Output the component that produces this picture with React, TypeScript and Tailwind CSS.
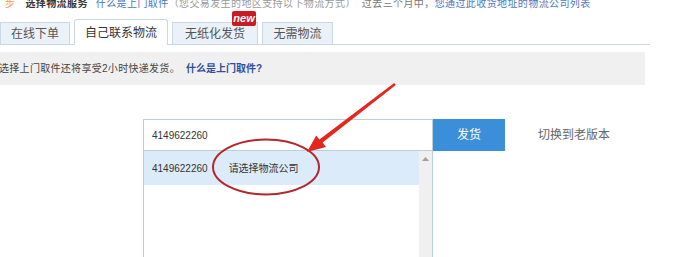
import React from "react";

const tabs = [
  { label: "在线下单", w: "w-[70px]" },
  { label: "自己联系物流", w: "w-[94px]", active: true },
  { label: "无纸化发货", w: "w-[86px]", badge: true },
  { label: "无需物流", w: "w-[71px]" },
];

export default function App() {
  return (
    <div
      className="relative w-[673px] h-[257px] overflow-hidden bg-white"
      style={{ fontFamily: '"Liberation Sans", "Noto Sans CJK SC", sans-serif' }}
    >
      {/* step line, cut off at the top */}
      <div className="-mt-[1px] h-[21px] pl-[5px] flex items-start text-[10px] leading-[10px] tracking-[0.4px] whitespace-nowrap">
        <span className="text-[#f0a050]">步</span>
        <span className="ml-[10px] font-bold text-[#333]">选择物流服务</span>
        <span className="ml-[8px] text-[#4a78c0]">什么是上门取件</span>
        <span className="text-[#999]">（您交易发生的地区支持以下物流方式）</span>
        <span className="ml-[6px] text-[#777]">过去三个月中，</span>
        <span className="text-[#4a78c0]">您通过此收货地址的物流公司列表</span>
      </div>

      {/* tabs */}
      <div className="flex items-end gap-[4px] w-[650px] h-[25px] border-b border-[#c8d8e6]">
        {tabs.map((t) => (
          <div
            key={t.label}
            className={
              t.active
                ? `relative ${t.w} h-[26px] -mb-px flex items-center justify-center bg-white border border-b-0 border-[#c8d8e6] rounded-t-[3px] text-[12px] text-[#333]`
                : `relative ${t.w} h-[22px] flex items-center justify-center bg-[#eaf1f8] border border-b-0 border-[#c8d8e6] text-[12px] text-[#555]`
            }
          >
            {t.label}
            {t.badge && (
              <span className="absolute -top-[12px] right-[1px] w-[24px] h-[15px] rounded-[2px] bg-[#cc1a22] text-white text-[11px] leading-[15px] font-bold italic text-center">
                new
              </span>
            )}
          </div>
        ))}
      </div>

      {/* notice band */}
      <div className="mt-[7px] w-[645px] h-[33px] bg-[#f0f0f0] flex items-center text-[10px] text-[#444] whitespace-nowrap">
        <span className="-ml-[1px] tracking-[0.3px]">选择上门取件还将享受2小时快递发货。</span>
        <span className="ml-[6px] font-bold text-[#2f4f9e]">什么是上门取件?</span>
      </div>

      {/* input row */}
      <div className="mt-[34px] pl-[143px] flex items-center">
        <div className="w-[290px] h-[32px] border border-[#bcd0dc] flex items-center pl-[8px] text-[10px] text-[#333]">
          4149622260
        </div>
        <div className="w-[72px] h-[32px] bg-[#3b8ed8] flex items-center justify-center text-[12px] text-white">
          发货
        </div>
        <div className="ml-[33px] text-[12px] text-[#666]">切换到老版本</div>
      </div>

      {/* dropdown */}
      <div className="ml-[143px] w-[290px] h-[110px] border-x border-[#bcd0dc] flex">
        <div className="flex-1">
          <div className="h-[34px] bg-[#dcebfa] flex items-center pl-[8px] text-[10px] text-[#333]">
            <span>4149622260</span>
            <span className="ml-[21px]">请选择物流公司</span>
          </div>
        </div>
        <div className="w-[13px] bg-[#f0f0f0] flex justify-center pt-[6px]">
          <svg width="7" height="4" viewBox="0 0 7 4">
            <path d="M0 4 L3.5 0 L7 4 Z" fill="#a0a0a0" />
          </svg>
        </div>
      </div>

      {/* annotation: circle and arrow */}
      <svg className="absolute inset-0 pointer-events-none" width="673" height="257" viewBox="0 0 673 257">
        <ellipse cx="266" cy="167" rx="53" ry="27.5" fill="none" stroke="#b3262c" strokeWidth="2" />
        <polygon
          points="395.8,85 322.6,142.6 326,147 307,152 316.2,135.4 319.4,139.4 394.2,83"
          fill="#e3271f"
        />
      </svg>
    </div>
  );
}
